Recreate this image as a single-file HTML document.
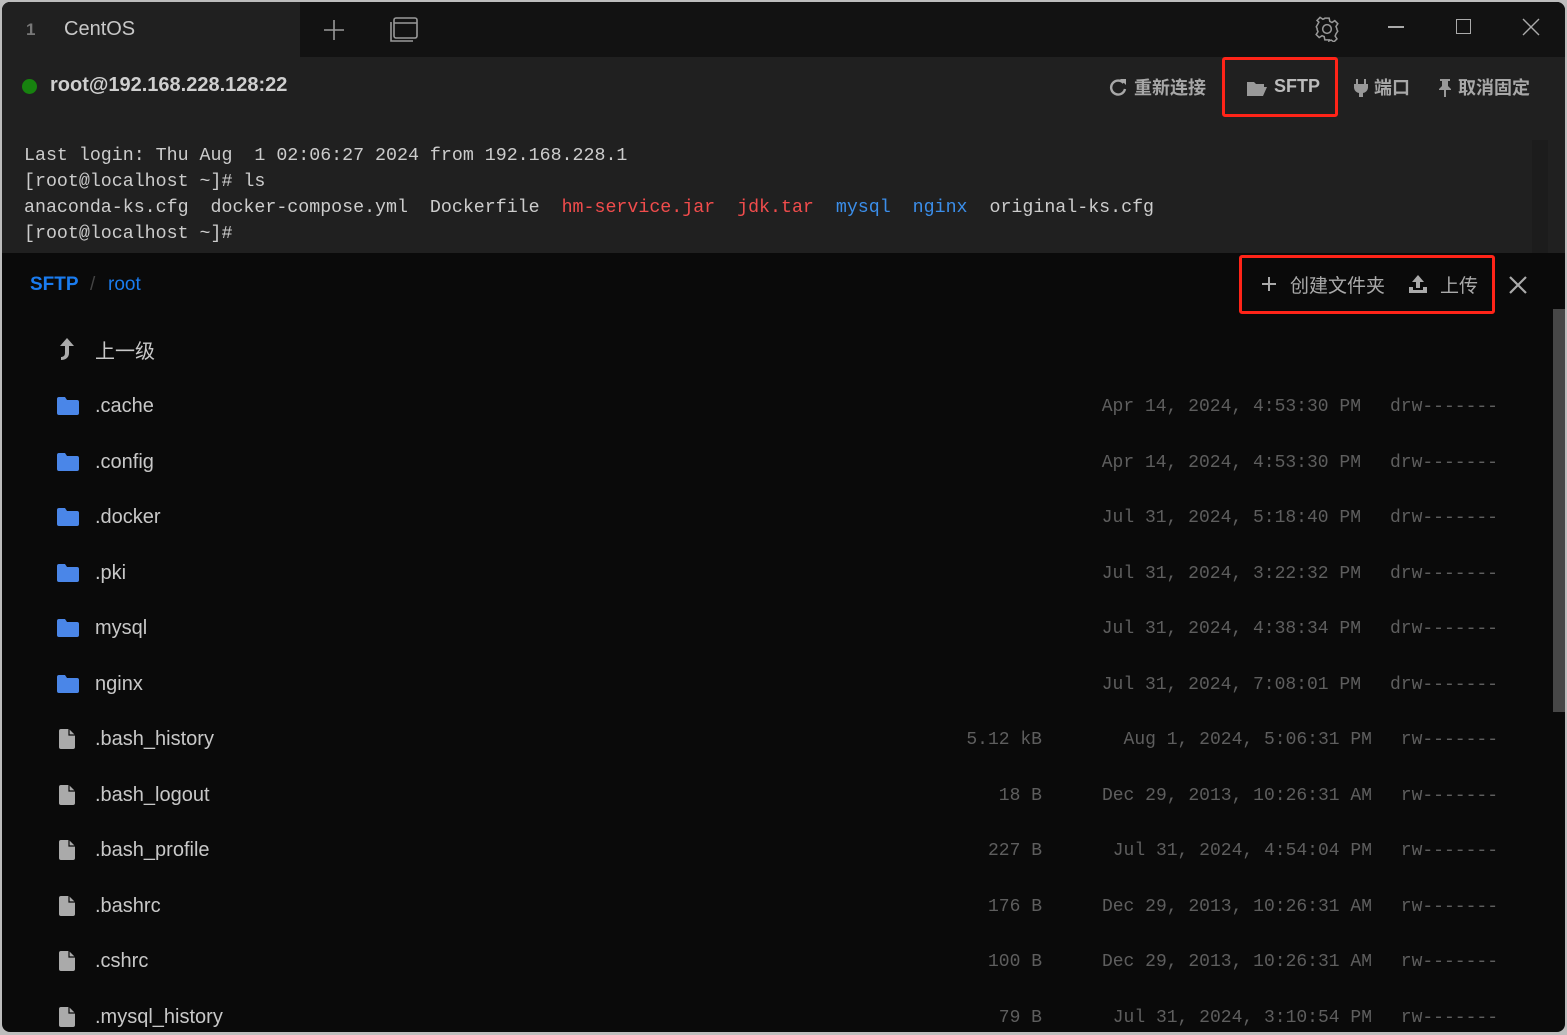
<!DOCTYPE html>
<html><head><meta charset="utf-8"><style>
*{margin:0;padding:0;box-sizing:border-box}
body{width:1567px;height:1035px;background:#bdbdbd;position:relative;overflow:hidden;font-family:"Liberation Sans","Noto Sans CJK SC",sans-serif}
.win{position:absolute;left:2px;top:2px;width:1563px;height:1030px;background:#0a0a0a;border-radius:8px;overflow:hidden}
.a{position:absolute;white-space:pre}
.mono{font-family:"Liberation Mono","DejaVu Sans Mono",monospace}
.name{font-size:20px;color:#c8c8c8}
.meta{font-family:"Liberation Mono",monospace;font-size:18px;color:#5e5e5e;text-align:right}
</style></head><body>
<div class="win">
 <div class="a" style="left:0;top:0;width:1563px;height:55px;background:#121212"></div>
 <div class="a" style="left:0;top:0;width:298px;height:55px;background:#202020"></div>
 <div class="a" style="left:24px;top:18px;font-size:17px;color:#777;font-weight:bold">1</div>
 <div class="a" style="left:62px;top:16px;font-size:20px;color:#c8c8c8">CentOS</div>
 <svg class="a" style="left:320px;top:16px" width="24" height="24"><path d="M12 2V22M2 12H22" stroke="#999" stroke-width="1.6"/></svg>
 <svg class="a" style="left:386px;top:13px" width="32" height="30"><rect x="6" y="3" width="23" height="20" rx="2" fill="none" stroke="#999" stroke-width="1.6"/><path d="M6 8H29M3 7V26H25" stroke="#999" stroke-width="1.6" fill="none"/></svg>
 <svg class="a" style="left:1312px;top:14px" width="26" height="26" viewBox="0 0 24 24"><path d="M12 8a4 4 0 1 0 0 8a4 4 0 1 0 0-8zM10 2h4l.6 3 2 1 2.6-1.7 2.8 2.8L20.3 9.7l.8 2v.6L21.9 14l-1.6 2.5-.8 2 1.7 2.6-2.8 2.8-2.6-1.7-2 .8L14 22h-4l-.6-3-2-.8-2.6 1.7-2.8-2.8L3.7 14.5l-.8-2V11.7L2.1 10 3.7 7.1l.8-1.4L2.8 4.1 5.6 1.3l2.6 1.7 1.4-.6z" fill="none" stroke="#999" stroke-width="1.4"/></svg>
 <div class="a" style="left:1386px;top:24px;width:16px;height:1.5px;background:#aaa"></div>
 <div class="a" style="left:1454px;top:17px;width:15px;height:15px;border:1.5px solid #aaa"></div>
 <svg class="a" style="left:1520px;top:16px" width="18" height="18"><path d="M1 1L17 17M17 1L1 17" stroke="#aaa" stroke-width="1.4"/></svg>

 <div class="a" style="left:0;top:55px;width:1563px;height:196px;background:#202020"></div>
 <div class="a" style="left:20px;top:77px;width:15px;height:15px;border-radius:50%;background:#17820f"></div>
 <div class="a" style="left:48px;top:72px;font-size:20px;font-weight:bold;color:#cfcfcf">root@192.168.228.128:22</div>
 <svg class="a" style="left:1107px;top:76px" width="18" height="18"><path d="M14.5 5A7 7 0 1 0 16 11" fill="none" stroke="#a8a8a8" stroke-width="2.4"/><path d="M11 1h6v6z" fill="#a8a8a8"/></svg>
 <div class="a" style="left:1132px;top:72px;font-size:18px;font-weight:bold;color:#a8a8a8">重新连接</div>
 <div class="a" style="left:1220px;top:55px;width:116px;height:60px;border:3px solid #ff2418;border-radius:3px"></div>
 <svg class="a" style="left:1244px;top:77px" width="22" height="18"><path d="M1 3h7l2 2h8v3H6l-4 9H1zM6 8h15l-4 9H2z" fill="#999"/></svg>
 <div class="a" style="left:1272px;top:74px;font-size:18px;font-weight:bold;color:#bbb">SFTP</div>
 <svg class="a" style="left:1351px;top:76px" width="16" height="20"><path d="M4 1v5M12 1v5" stroke="#999" stroke-width="2"/><path d="M1 6h14v4a6 6 0 0 1-5 5v4H6v-4a6 6 0 0 1-5-5z" fill="#999"/></svg>
 <div class="a" style="left:1372px;top:72px;font-size:18px;font-weight:bold;color:#a8a8a8">端口</div>
 <svg class="a" style="left:1435px;top:76px" width="16" height="20"><path d="M3 1h10v2h-2v5l3 3v1H9v7H7v-7H2v-1l3-3V3H3z" fill="#999"/></svg>
 <div class="a" style="left:1456px;top:72px;font-size:18px;font-weight:bold;color:#a8a8a8">取消固定</div>

 <div class="a mono" style="left:22px;top:141px;font-size:18.3px;line-height:26px;color:#cccccc">Last login: Thu Aug  1 02:06:27 2024 from 192.168.228.1
[root@localhost ~]# ls
anaconda-ks.cfg  docker-compose.yml  Dockerfile  <span style="color:#f14c4c">hm-service.jar</span>  <span style="color:#f14c4c">jdk.tar</span>  <span style="color:#3b8eea">mysql</span>  <span style="color:#3b8eea">nginx</span>  original-ks.cfg
[root@localhost ~]#</div>
 <div class="a" style="left:1530px;top:138px;width:16px;height:113px;background:#1c1c1c"></div>

 <div class="a" style="left:28px;top:272px;font-size:19px;font-weight:bold;color:#1a7cf0">SFTP</div>
 <div class="a" style="left:88px;top:272px;font-size:19px;color:#444">/</div>
 <div class="a" style="left:106px;top:272px;font-size:19px;color:#1a7cf0">root</div>
 <div class="a" style="left:1237px;top:253px;width:256px;height:59px;border:3px solid #ff2418;border-radius:3px"></div>
 <svg class="a" style="left:1258px;top:273px" width="18" height="18"><path d="M9 2V16M2 9H16" stroke="#aaa" stroke-width="2"/></svg>
 <div class="a" style="left:1288px;top:269px;font-size:19px;color:#aaa">创建文件夹</div>
 <svg class="a" style="left:1405px;top:271px" width="22" height="22"><path d="M11 2l-6 7h4v6h4V9h4zM2 14h4v3h10v-3h4v6H2z" fill="#aaa"/></svg>
 <div class="a" style="left:1438px;top:269px;font-size:19px;color:#aaa">上传</div>
 <svg class="a" style="left:1506px;top:273px" width="20" height="20"><path d="M2 2L18 18M18 2L2 18" stroke="#aaa" stroke-width="2.2"/></svg>
 <div class="a" style="left:1551px;top:307px;width:12px;height:403px;background:#474747"></div>

 <svg class="a" style="left:56px;top:334px" width="18" height="26"><path d="M9 2L2 10h5v7c0 3-2 4-4 4v3c4 0 8-2 8-7v-7h5z" fill="#aaa"/></svg>
 <div class="a name" style="left:93px;top:333px">上一级</div>

 <div id="rows"></div>
</div>
<script>
var rows=[
['f','.cache','','Apr 14, 2024, 4:53:30 PM','drw-------'],
['f','.config','','Apr 14, 2024, 4:53:30 PM','drw-------'],
['f','.docker','','Jul 31, 2024, 5:18:40 PM','drw-------'],
['f','.pki','','Jul 31, 2024, 3:22:32 PM','drw-------'],
['f','mysql','','Jul 31, 2024, 4:38:34 PM','drw-------'],
['f','nginx','','Jul 31, 2024, 7:08:01 PM','drw-------'],
['d','.bash_history','5.12 kB','Aug 1, 2024, 5:06:31 PM','rw-------'],
['d','.bash_logout','18 B','Dec 29, 2013, 10:26:31 AM','rw-------'],
['d','.bash_profile','227 B','Jul 31, 2024, 4:54:04 PM','rw-------'],
['d','.bashrc','176 B','Dec 29, 2013, 10:26:31 AM','rw-------'],
['d','.cshrc','100 B','Dec 29, 2013, 10:26:31 AM','rw-------'],
['d','.mysql_history','79 B','Jul 31, 2024, 3:10:54 PM','rw-------']];
var h='';
rows.forEach(function(r,i){
 var cy=404+i*55.5;
 if(r[0]=='f') h+='<svg class="a" style="left:54px;top:'+(cy-10)+'px" width="24" height="20"><path d="M1 3a2 2 0 0 1 2-2h6l2 3h10a2 2 0 0 1 2 2v11a2 2 0 0 1-2 2H3a2 2 0 0 1-2-2z" fill="#4a86e8"/></svg>';
 else h+='<svg class="a" style="left:56px;top:'+(cy-11)+'px" width="18" height="22"><path d="M3 1h8l6 6v12a2 2 0 0 1-2 2H3a2 2 0 0 1-2-2V3a2 2 0 0 1 2-2z" fill="#aaa"/><path d="M11 1v6h6" fill="none" stroke="#0a0a0a" stroke-width="1.2"/></svg>';
 h+='<div class="a name" style="left:93px;top:'+(cy-11)+'px">'+r[1]+'</div>';
 var dr=r[0]=='f'?1359:1370;
 h+='<div class="a meta" style="right:'+(1563-1040)+'px;top:'+(cy-9)+'px">'+r[2]+'</div>';
 h+='<div class="a meta" style="right:'+(1563-dr)+'px;top:'+(cy-9)+'px">'+r[3]+'</div>';
 h+='<div class="a meta" style="right:'+(1563-1496)+'px;top:'+(cy-9)+'px">'+r[4]+'</div>';
});
document.getElementById('rows').outerHTML=h;
</script>
</body></html>
